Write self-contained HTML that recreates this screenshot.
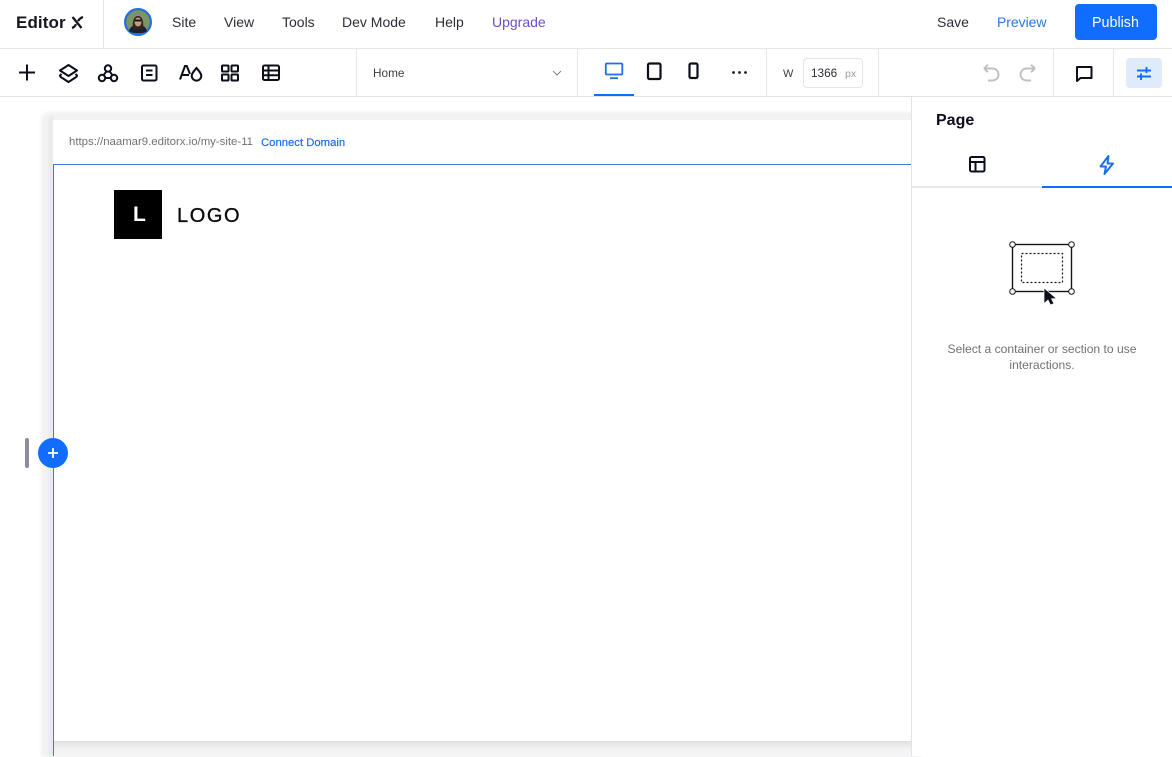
<!DOCTYPE html>
<html><head><meta charset="utf-8">
<style>
html,body{margin:0;padding:0;width:1172px;height:756px;overflow:hidden;background:#fff;font-family:"Liberation Sans",sans-serif;-webkit-font-smoothing:antialiased}
.a{position:absolute}
.t{position:absolute;white-space:nowrap;line-height:16px}
.m{font-size:14px;color:#2b2e36;top:14px}
svg{position:absolute;overflow:visible}
.d{position:absolute;background:#e6e7ea;width:1px}
</style></head><body>
<div class="a" style="left:0;top:97px;width:911px;height:659px;background:#fff"></div>
<!-- canvas shadow -->
<div class="a" style="left:41px;top:112px;width:880px;height:645px;background:#f2f2f3;border-radius:8px 0 0 0;filter:blur(1.500px)"></div>
<div class="a" style="left:49px;top:116px;width:4px;height:640px;background:#e9e9eb;filter:blur(1px)"></div>
<div class="a" style="left:53px;top:741px;width:858px;height:15px;background:linear-gradient(#e0e0e2,#f2f2f3 50%,#f6f6f7)"></div>
<div class="a" style="left:53px;top:120px;width:858px;height:621px;background:#fff"></div>
<div class="t" style="left:69px;top:134px;font-size:11.400px;color:#6f7178">https://naamar9.editorx.io/my-site-11</div>
<div class="t" style="left:261px;top:135px;font-size:11.300px;color:#1d6fe8;-webkit-text-stroke:.2px #1d6fe8">Connect Domain</div>
<div class="a" style="left:53px;top:164px;width:858px;height:1px;background:#3f79d6"></div>
<div class="a" style="left:53px;top:164px;width:1px;height:592px;background:#3a7be0"></div>
<div class="a" style="left:114px;top:190px;width:48px;height:49px;background:#000"></div>
<div class="t" style="left:133px;top:207px;font-size:21px;font-weight:700;color:#fff">L</div>
<div class="t" style="left:177px;top:208px;font-size:20px;letter-spacing:1.600px;color:#0b0b0b;-webkit-text-stroke:.35px #0b0b0b">LOGO</div>
<!-- add section -->
<div class="a" style="left:25px;top:438px;width:4px;height:30px;background:#8b8c9c;border-radius:2px"></div>
<div class="a" style="left:38px;top:438px;width:30px;height:30px;background:#116dff;border-radius:50%"></div>
<svg style="left:38px;top:438px" width="30" height="30"><path d="M15 10V20M10 15H20" stroke="#fff" stroke-width="1.800"/></svg>
<!-- top bars -->
<div class="a" style="left:0;top:0;width:1172px;height:96px;background:#fff"></div>
<div class="a" style="left:0;top:48px;width:1172px;height:1px;background:#e6e7ea"></div>
<div class="a" style="left:0;top:96px;width:1172px;height:1px;background:#e2e3e6"></div>
<div class="d" style="left:103px;top:0;height:48px"></div>
<div class="d" style="left:356px;top:49px;height:47px"></div>
<div class="d" style="left:577px;top:49px;height:47px"></div>
<div class="d" style="left:766px;top:49px;height:47px"></div>
<div class="d" style="left:878px;top:49px;height:47px"></div>
<div class="d" style="left:1053px;top:49px;height:47px"></div>
<div class="d" style="left:1113px;top:49px;height:47px"></div>
<div class="t" style="left:16px;top:15px;font-size:17px;font-weight:700;color:#16171c;letter-spacing:.1px">Editor</div>
<svg style="left:71px;top:16px" width="13" height="13"><path d="M1.500 1L10.500 12M12 1C9.500 1.800 8 3.500 7 5.200M1 12C3 11.300 4.300 9.800 5 8.200" stroke="#16171c" stroke-width="2.300" fill="none"/></svg>
<!-- avatar -->
<svg style="left:124px;top:8px" width="28" height="28"><circle cx="14" cy="14" r="13" fill="#6f8a5c" stroke="#1d6fe8" stroke-width="2"/><circle cx="14" cy="14" r="11.500" fill="#7b9468"/><path d="M5 23C6 19 9 17 14 17C19 17 22 19 23 23C20 26 8 26 5 23Z" fill="#1a2030"/><path d="M9 21C8 13 10 8 14 8C18 8 20 13 19 21Z" fill="#33241c"/><ellipse cx="14" cy="14" rx="3.500" ry="4.500" fill="#c49a80"/><path d="M10.500 12.500H17.500" stroke="#111" stroke-width="1.800"/></svg>
<div class="t m" style="left:172px">Site</div>
<div class="t m" style="left:224px">View</div>
<div class="t m" style="left:282px">Tools</div>
<div class="t m" style="left:342px">Dev Mode</div>
<div class="t m" style="left:435px">Help</div>
<div class="t m" style="left:492px;color:#6a4fc9">Upgrade</div>
<div class="t m" style="left:937px">Save</div>
<div class="t m" style="left:997px;color:#2b78e4;letter-spacing:-.05px">Preview</div>
<div class="a" style="left:1075px;top:4px;width:82px;height:36px;background:#116dff;border-radius:4px"></div>
<div class="t" style="left:1092px;top:15px;font-size:14.300px;color:#fff">Publish</div>
<!-- tool icons -->
<svg style="left:0;top:49px" width="300" height="47" fill="none" stroke="#0c0e1c" stroke-width="2">
<path d="M27 15.500V31.500M19 23.500H35"/>
<path d="M68.500 16L77 21.500L68.500 27L60 21.500Z" stroke-linejoin="round"/><path d="M61.500 25L60 26.500C60 27.500 60.500 28 61.500 28.500L68.500 33L75.500 28.500C76.500 28 77 27.500 77 26.500L75.500 25"/>
<circle cx="108" cy="19.500" r="3.200"/><circle cx="102" cy="29" r="3.200"/><circle cx="114" cy="29" r="3.200"/><path d="M106.500 22.300L103.500 26.200M109.500 22.300L112.500 26.200M105.200 29H110.800"/>
<rect x="142" y="16.500" width="14.500" height="15" rx="1.500"/><path d="M146 21.500H152.500M146 26H152.500"/>
<path d="M180 30.500L185 17H186.800L190 25M182.500 26H189"/><path d="M196.500 19C193.500 22.500 191.700 24.500 191.700 26.800A4.800 4.800 0 0 0 201.300 26.800C201.300 24.500 199.500 22.500 196.500 19Z"/>
<rect x="222" y="16.500" width="6.500" height="6" rx=".8"/><rect x="231.500" y="16.500" width="6.500" height="6" rx=".8"/><rect x="222" y="25.500" width="6.500" height="6" rx=".8"/><rect x="231.500" y="25.500" width="6.500" height="6" rx=".8"/>
<rect x="263" y="16.500" width="16" height="14.500" rx="1.500"/><path d="M263 21.500H279M263 26.300H279M268.500 16.500V31"/>
</svg>
<div class="t" style="left:373px;top:65px;font-size:11.800px;color:#3b3d45">Home</div>
<svg style="left:552px;top:70px" width="10" height="6"><path d="M1 1L5 5L9 1" fill="none" stroke="#80828a" stroke-width="1"/></svg>
<!-- devices -->
<svg style="left:600px;top:60px" width="160" height="26" fill="none">
<rect x="5.800" y="3.500" width="16.500" height="11" rx="1" stroke="#1d6fe8" stroke-width="1.800"/><path d="M10 18.200H18" stroke="#1d6fe8" stroke-width="1.800"/>
<rect x="48" y="3.500" width="12.500" height="15.500" rx="1.500" stroke="#0c0e1c" stroke-width="2.200"/>
<rect x="89.500" y="3.500" width="8" height="14.500" rx="1.500" stroke="#0c0e1c" stroke-width="2.200"/>
<circle cx="133.500" cy="12.500" r="1.400" fill="#1a1c26"/><circle cx="139.500" cy="12.500" r="1.400" fill="#1a1c26"/><circle cx="145.500" cy="12.500" r="1.400" fill="#1a1c26"/>
</svg>
<div class="a" style="left:594px;top:94px;width:40px;height:2px;background:#116dff"></div>
<div class="t" style="left:783px;top:66px;font-size:11px;color:#3b3d45">W</div>
<div class="a" style="left:803px;top:58px;width:60px;height:30px;border:1px solid #e4e5e8;border-radius:4px;box-sizing:border-box"></div>
<div class="t" style="left:811px;top:65px;font-size:11.800px;color:#2b2e36">1366</div>
<div class="t" style="left:845px;top:66px;font-size:10.500px;color:#9a9ca3">px</div>
<!-- undo redo -->
<svg style="left:980px;top:62px" width="60" height="22" fill="none" stroke="#bfc0c4" stroke-width="1.900"><path d="M4 6.500H12.500A6 6 0 0 1 12.500 18.500H8M4 6.500L8 2.800M4 6.500L8 10.200"/><path d="M55 6.500H46.500A6 6 0 0 0 46.500 18.500H51M55 6.500L51 2.800M55 6.500L51 10.200"/></svg>
<svg style="left:1075px;top:65px" width="18" height="18" fill="none" stroke="#0c0e1c" stroke-width="2"><path d="M2 2H16.500V13H5.500L2 16Z" stroke-linejoin="round"/></svg>
<div class="a" style="left:1126px;top:58px;width:36px;height:30px;background:#dfebfb;border-radius:4px"></div>
<svg style="left:1136px;top:66px" width="16" height="14" stroke="#116dff" stroke-width="1.900" fill="none"><path d="M1 4.500H15M1 10.500H15M10.500 1V7M5 7.500V14"/></svg>
<!-- right panel -->
<div class="a" style="left:911px;top:97px;width:261px;height:659px;background:#fff;border-left:1px solid #e2e3e6"></div>
<div class="t" style="left:936px;top:113px;font-size:16px;font-weight:700;color:#0c0e1c">Page</div>
<svg style="left:968px;top:155px" width="20" height="20" fill="none" stroke="#0c0e1c" stroke-width="2"><rect x="2" y="2" width="14.500" height="14.500" rx="1.500"/><path d="M2 7H16.500M7.500 7V16.500"/></svg>
<svg style="left:1098px;top:154px" width="18" height="22" fill="none" stroke="#1d6fe8" stroke-width="2" stroke-linejoin="round"><path d="M10.500 2L2.500 12.500H8L6.500 20L15 9.500H9.500Z"/></svg>
<div class="a" style="left:912px;top:186px;width:130px;height:2px;background:#e6e7ea"></div>
<div class="a" style="left:1042px;top:186px;width:130px;height:2px;background:#116dff"></div>
<!-- illustration -->
<svg style="left:1005px;top:238px" width="75" height="70">
<rect x="7.500" y="6.500" width="59" height="47" fill="none" stroke="#16171c" stroke-width="1.400"/>
<rect x="16.500" y="15.500" width="41" height="29" fill="none" stroke="#16171c" stroke-width="1.200" stroke-dasharray="2 2"/>
<circle cx="7.500" cy="6.500" r="2.800" fill="#fff" stroke="#16171c"/><circle cx="66.500" cy="6.500" r="2.800" fill="#fff" stroke="#16171c"/><circle cx="7.500" cy="53.500" r="2.800" fill="#fff" stroke="#16171c"/><circle cx="66.500" cy="53.500" r="2.800" fill="#fff" stroke="#16171c"/>
<path d="M39 50V65.500L43 62L45.500 67L49 65.500L46.500 60.800L51.500 60.500Z" fill="#0c0e1c" stroke="#fff" stroke-width=".7"/>
</svg>
<div class="t" style="left:912px;width:260px;top:341px;text-align:center;font-size:12.100px;color:#6f7178">Select a container or section to use</div>
<div class="t" style="left:912px;width:260px;top:357px;text-align:center;font-size:12.100px;color:#6f7178">interactions.</div>
</body></html>
